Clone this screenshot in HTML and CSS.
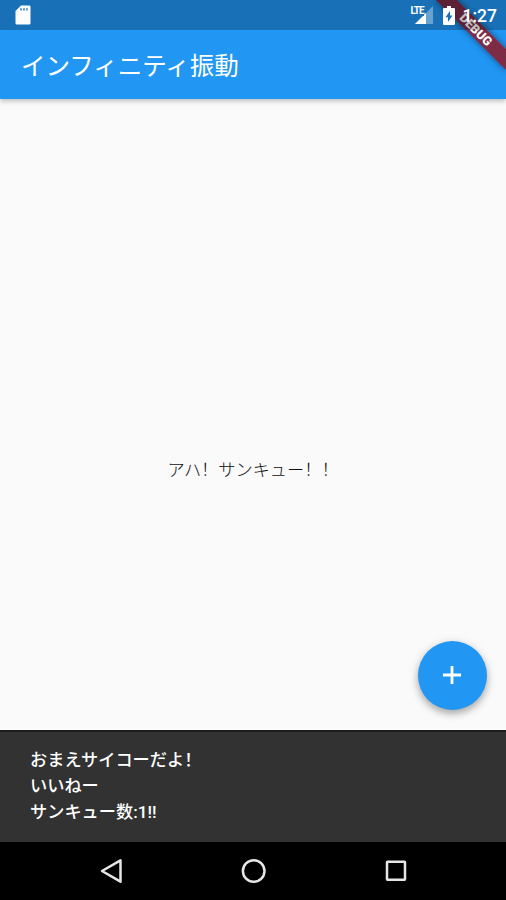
FILE: index.html
```html
<!DOCTYPE html>
<html lang="en">
<head>
    <meta charset="UTF-8">
    <meta name="viewport" content="width=device-width, initial-scale=1.0">
    <title>インフィニティ振動</title>
    <link rel="stylesheet" href="styles.css">
</head>
<body>
    <div class="screen">
        <header class="app-bar">
            <h1>インフィニティ振動</h1>
        </header>
        <div class="debug-banner">DEBUG</div>

        <div class="status-bar">
            <svg class="sd-icon" width="16" height="20" viewBox="0 0 16 20">
                <path d="M6 .5h8.2q1.3 0 1.3 1.3v16.4q0 1.3-1.3 1.3H1.8Q.5 19.5.5 18.2V6z" fill="#fff"/>
                <path d="M6 3.2v2.4M9 3.2v2.4M12 3.2v2.4" stroke="#1b70b7" stroke-width="1.4"/>
            </svg>
            <div class="status-right">
                <div class="signal">
                    <svg width="18" height="18" viewBox="0 0 18 18">
                        <path d="M18 0v18H0z" fill="#fff" opacity=".35"/>
                        <path d="M11 7v11H0z" fill="#fff"/>
                    </svg>
                    <span class="lte">LTE</span>
                </div>
                <svg class="battery" width="12" height="19" viewBox="0 0 12 19">
                    <path d="M4 0h4v2h3q1 0 1 1v15q0 1-1 1H1q-1 0-1-1V3q0-1 1-1h3z" fill="#fff"/>
                    <path d="M7 5v4.5h2.5L5 16v-4.8H2.5z" fill="#1b70b7"/>
                </svg>
                <span class="clock">1:27</span>
            </div>
        </div>

        <main class="content">
            <p>アハ！サンキュー！！</p>
            <button class="fab" aria-label="+">
                <svg width="18" height="18" viewBox="0 0 18 18">
                    <path d="M9 0v18M0 9h18" stroke="#fff" stroke-width="2.8"/>
                </svg>
            </button>
        </main>

        <div class="snackbar">おまえサイコーだよ！<br>いいねー<br>サンキュー数:1!!</div>

        <nav class="nav-bar">
            <svg width="28" height="28" viewBox="0 0 28 28">
                <path d="M23.5 3.3v21.4L5 14z"/>
            </svg>
            <svg width="28" height="28" viewBox="0 0 28 28">
                <circle cx="13.7" cy="14" r="10.8"/>
            </svg>
            <svg width="28" height="28" viewBox="0 0 28 28">
                <rect x="5" y="4.8" width="18" height="18" rx=".5"/>
            </svg>
        </nav>
    </div>
</body>
</html>
```
FILE: styles.css
```css
* {
    box-sizing: border-box;
}
body {
    margin: 0;
    font-family: Roboto, "Noto Sans CJK SC", sans-serif;
    background: #fafafa;
}
.screen {
    position: relative;
    display: flex;
    flex-direction: column;
    height: 900px;
    overflow: hidden;
}
.app-bar {
    display: flex;
    align-items: center;
    height: 99px;
    padding: 34px 20px 0 21px;
    background: #2196f3;
    color: #fff;
    box-shadow: 0 2px 5px rgba(0,0,0,0.25);
    z-index: 1;
}
.app-bar h1 {
    margin: 0;
    font-size: 24.5px;
    font-weight: 400;
    line-height: 36px;
}
.debug-banner {
    position: absolute;
    top: 22px;
    right: -19px;
    width: 98px;
    height: 15px;
    background: rgba(139,28,46,0.88);
    color: #fff;
    font-size: 12.5px;
    font-weight: 900;
    line-height: 15px;
    text-align: center;
    transform: rotate(45deg);
    box-shadow: 0 0 6px rgba(0,0,0,0.5);
    z-index: 2;
}

/* drawn over the app bar and the banner */
.status-bar {
    position: absolute;
    top: 0;
    left: 0;
    display: flex;
    justify-content: space-between;
    width: 100%;
    height: 30px;
    padding: 5px 9px 0 15px;
    background: rgba(0,0,0,0.25);
    color: #fff;
    z-index: 3;
}
.status-right {
    display: flex;
}
.signal {
    position: relative;
    width: 22px;
    padding: 1px 0 0 4px;
}
.lte {
    position: absolute;
    top: 1px;
    left: 0;
    font-size: 10px;
    font-weight: 700;
    line-height: 10px;
    letter-spacing: -1px;
    background: #1b70b7;
}
.battery {
    margin: 1px 8px 0 10px;
}
.clock {
    font-size: 17.5px;
    font-weight: 500;
    line-height: 22px;
}

.content {
    position: relative;
    display: flex;
    flex: 1;
    justify-content: center;
}
.content p {
    margin: 358px 0 0;
    font-size: 17.2px;
    font-weight: 300;
    line-height: 26px;
    color: #111;
}
.fab {
    position: absolute;
    right: 19px;
    bottom: 20px;
    display: flex;
    align-items: center;
    justify-content: center;
    width: 69px;
    height: 69px;
    padding: 0 1px 1px 0;
    border: none;
    border-radius: 50%;
    background: #2196f3;
    box-shadow: 0 4px 7px rgba(0,0,0,0.25), 0 2px 12px rgba(0,0,0,0.12);
}
.snackbar {
    height: 112px;
    padding: 15px 30px;
    border-top: 2px solid #1c1c1c;
    background: #323232;
    color: #fff;
    font-size: 17.2px;
    font-weight: 500;
    line-height: 26px;
}
.nav-bar {
    display: flex;
    align-items: center;
    justify-content: space-between;
    height: 58px;
    padding: 0 96px 0 97px;
    background: #000;
}
.nav-bar svg {
    fill: none;
    stroke: #e6e6e6;
    stroke-width: 2.5;
    stroke-linejoin: round;
}
```
